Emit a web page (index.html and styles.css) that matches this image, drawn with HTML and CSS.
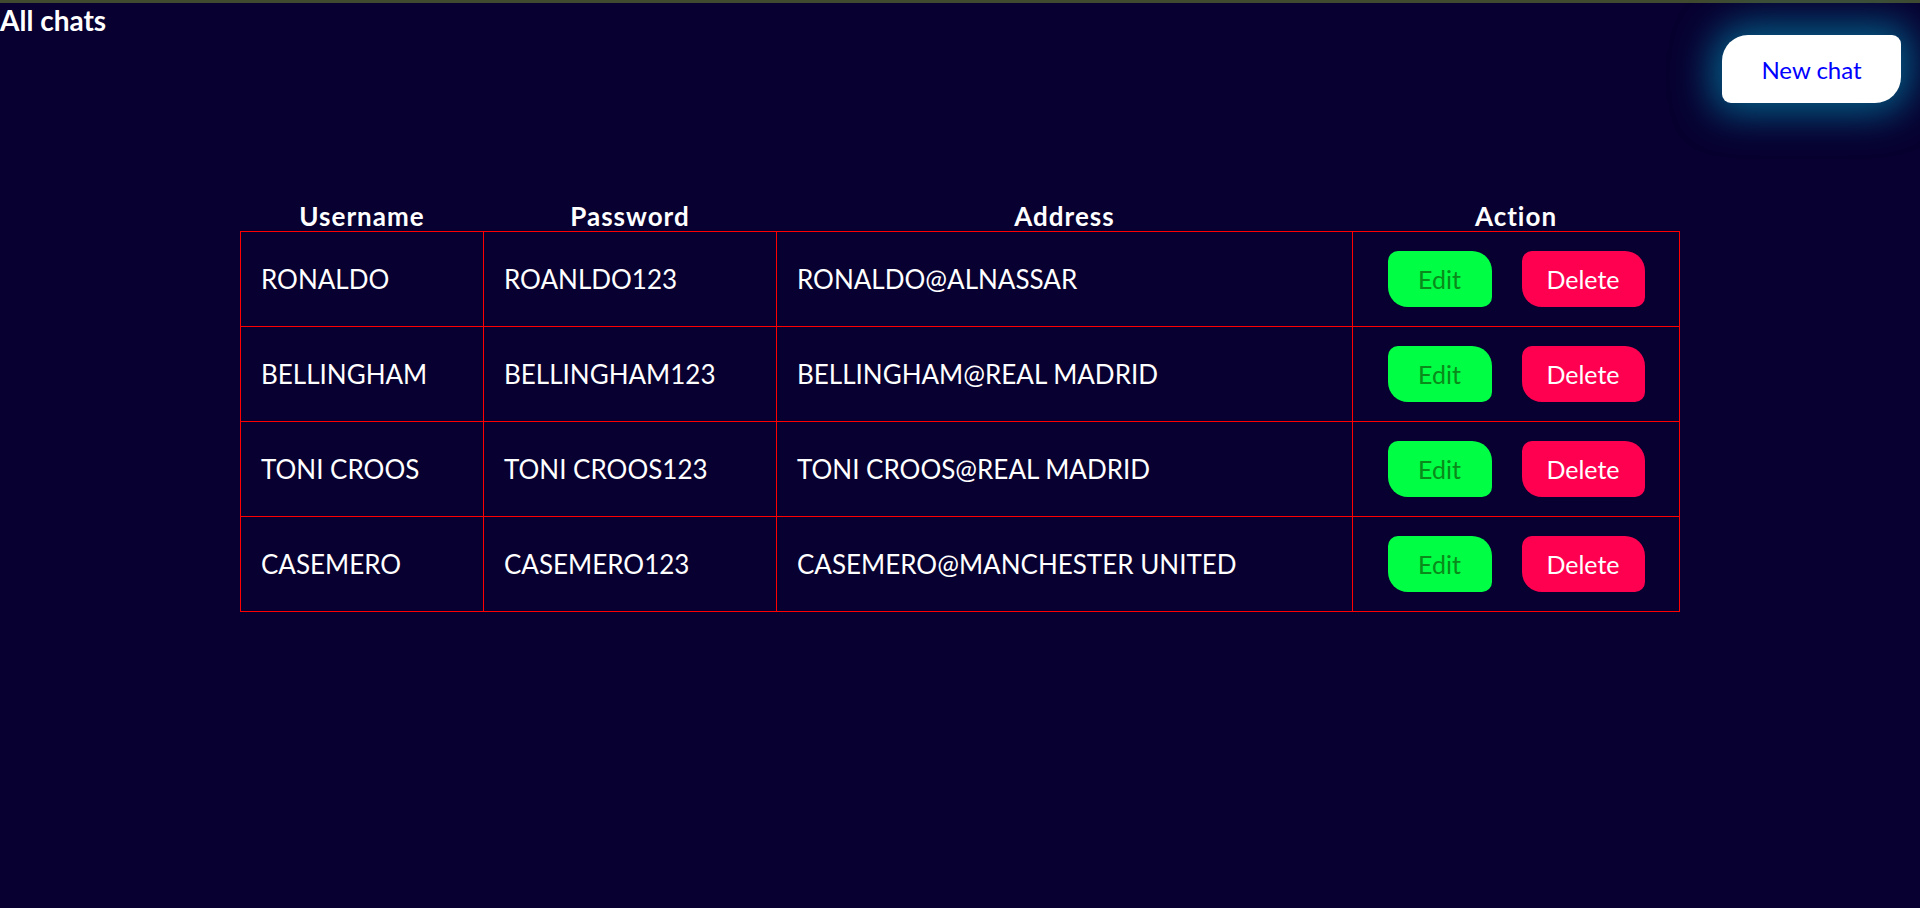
FILE: index.html
```html
<!DOCTYPE html>
<html lang="en">
<head>
<meta charset="utf-8">
<title>All chats</title>
<link rel="stylesheet" href="styles.css">
</head>
<body>
<div class="page">
  <header class="topbar">
    <h1 class="title">All chats</h1>
    <button class="new-chat">New chat</button>
  </header>
  <table class="users">
    <colgroup>
      <col class="c-user">
      <col class="c-pass">
      <col class="c-addr">
      <col class="c-act">
    </colgroup>
    <thead>
      <tr>
        <th>Username</th>
        <th>Password</th>
        <th>Address</th>
        <th>Action</th>
      </tr>
    </thead>
    <tbody>
      <tr>
        <td>RONALDO</td>
        <td>ROANLDO123</td>
        <td>RONALDO@ALNASSAR</td>
        <td class="actions"><button class="btn btn-edit">Edit</button><button class="btn btn-delete">Delete</button></td>
      </tr>
      <tr>
        <td>BELLINGHAM</td>
        <td>BELLINGHAM123</td>
        <td>BELLINGHAM@REAL MADRID</td>
        <td class="actions"><button class="btn btn-edit">Edit</button><button class="btn btn-delete">Delete</button></td>
      </tr>
      <tr>
        <td>TONI CROOS</td>
        <td>TONI CROOS123</td>
        <td>TONI CROOS@REAL MADRID</td>
        <td class="actions"><button class="btn btn-edit">Edit</button><button class="btn btn-delete">Delete</button></td>
      </tr>
      <tr>
        <td>CASEMERO</td>
        <td>CASEMERO123</td>
        <td>CASEMERO@MANCHESTER UNITED</td>
        <td class="actions"><button class="btn btn-edit">Edit</button><button class="btn btn-delete">Delete</button></td>
      </tr>
    </tbody>
  </table>
</div>
</body>
</html>
```

FILE: styles.css
```css
html, body {
  margin: 0;
  padding: 0;
  background: #070030;
}

body {
  font-family: Lato, "Open Sans", sans-serif;
  color: #ffffff;
  min-height: 908px;
}

.page {
  border-top: 3px solid #404a2f;
  min-height: 905px;
  background: #070030;
}

.topbar {
  display: flex;
  justify-content: space-between;
  align-items: flex-start;
}

.title {
  margin: 0;
  font-size: 28px;
  font-weight: 700;
  line-height: 34px;
  color: #ffffff;
}

.new-chat {
  margin: 32px 19px 0 0;
  width: 179px;
  height: 68px;
  border: none;
  border-radius: 26px 9px 26px 9px;
  background: #ffffff;
  color: #0000ff;
  font-family: Lato, "Open Sans", sans-serif;
  font-size: 24px;
  box-shadow: 0 0 38px 10px rgba(0, 160, 195, 0.6);
  cursor: pointer;
}

.users {
  width: 1439px;
  margin: 98px auto 0;
  border-collapse: collapse;
  table-layout: fixed;
}

.c-user { width: 243px; }
.c-pass { width: 293px; }
.c-addr { width: 576px; }
.c-act  { width: 327px; }

.users th {
  padding: 0;
  height: 30px;
  line-height: 28px;
  font-size: 26px;
  font-weight: 700;
  letter-spacing: 1px;
  text-align: center;
  vertical-align: middle;
  color: #ffffff;
}

.users td {
  height: 94px;
  padding: 0 20px;
  border: 1px solid #ff0000;
  font-size: 26px;
  color: #ffffff;
  vertical-align: middle;
  white-space: nowrap;
}

.users td.actions {
  padding: 0;
  text-align: center;
}

.btn {
  height: 56px;
  border: none;
  border-radius: 10px 20px 10px 20px;
  font-family: Lato, "Open Sans", sans-serif;
  font-size: 25px;
  vertical-align: middle;
  cursor: pointer;
}

.btn-edit {
  width: 104px;
  background: #00ff44;
  color: #0a8a1a;
}

.btn-delete {
  width: 123px;
  margin-left: 30px;
  background: #ff0050;
  color: #ffffff;
}
```
